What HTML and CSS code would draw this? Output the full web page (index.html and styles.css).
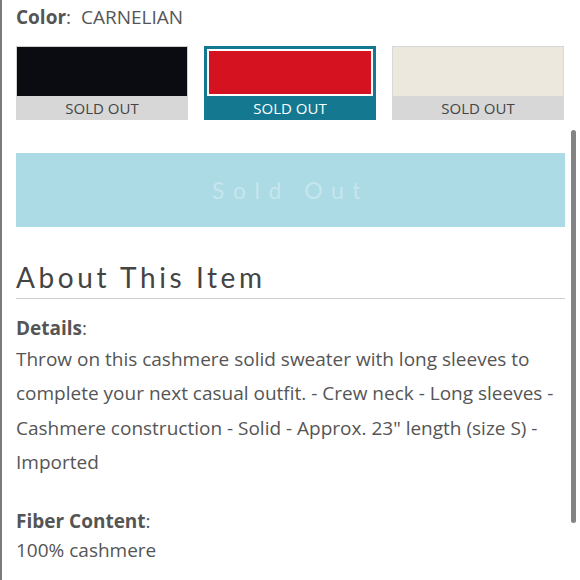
FILE: index.html
```html
<!DOCTYPE html>
<html>
<head>
<meta charset="utf-8">
<link rel="stylesheet" href="styles.css">
</head>
<body>
<div class="page">
  <div class="color-row"><span class="label">Color</span>:&nbsp; CARNELIAN</div>
  <div class="swatches">
    <div class="swatch">
      <div class="img black"></div>
      <div class="cap">SOLD OUT</div>
    </div>
    <div class="swatch selected">
      <div class="img red"></div>
      <div class="cap">SOLD OUT</div>
    </div>
    <div class="swatch">
      <div class="img cream"></div>
      <div class="cap">SOLD OUT</div>
    </div>
  </div>
  <div class="btn">Sold Out</div>
  <h2 class="about">About This Item</h2>
  <div class="section">
    <div class="label">Details<span class="colon">:</span></div>
    <p class="text">Throw on this cashmere solid sweater with long sleeves to complete your next casual outfit. - Crew neck - Long sleeves - Cashmere construction - Solid - Approx. 23" length (size S) - Imported</p>
  </div>
  <div class="section fiber">
    <div class="label">Fiber Content<span class="colon">:</span></div>
    <p class="text">100% cashmere</p>
  </div>
</div>
<div class="scrollbar"></div>
</body>
</html>
```
FILE: styles.css
```css
html, body {
  margin: 0;
  padding: 0;
  background: #fff;
}
body {
  height: 580px;
  overflow: hidden;
  border-left: 2px solid #7b7b7b;
  box-sizing: border-box;
  position: relative;
  font-family: "Open Sans", "Liberation Sans", sans-serif;
  color: #555;
}
.page {
  padding: 0 15px 0 14px;
}
.color-row {
  font-size: 19px;
  line-height: 24px;
  padding-top: 5px;
  color: #555;
}
.label {
  font-weight: 700;
  color: #555;
}
.colon { font-weight: 400; }
.swatches {
  display: flex;
  gap: 16px;
  margin-top: 17px;
}
.swatch {
  width: 172px;
  height: 74px;
  display: flex;
  flex-direction: column;
  box-sizing: border-box;
}
.swatch .img {
  height: 50px;
  box-sizing: border-box;
}
.img.black { background: #0b0b12; border: 1px solid #cfcfcf; border-bottom: none; }
.img.cream { background: #ece8de; border: 1px solid #d8d8d8; border-bottom: none; }
.swatch.selected {
  background: #147891;
  padding: 3px 3px 0;
}
.swatch.selected .img {
  height: 48px;
  background: #d5121f;
  border: 2px solid #fff;
}
.cap {
  flex: 1;
  background: #d7d7d7;
  color: #444;
  font-size: 15px;
  text-align: center;
  line-height: 24px;
}
.swatch.selected .cap {
  background: #147891;
  color: #fff;
}
.btn {
  margin-top: 33px;
  height: 74px;
  background: #acdae5;
  color: #c6e6ee;
  font-family: "Lato", "Liberation Sans", sans-serif;
  font-size: 23px;
  letter-spacing: 8.5px;
  display: flex;
  align-items: center;
  justify-content: center;
}
.about {
  margin: 34px 0 0;
  font-family: "Lato", "Liberation Sans", sans-serif;
  font-weight: 400;
  font-size: 28px;
  letter-spacing: 3.6px;
  color: #444;
  line-height: 32px;
  padding-bottom: 5px;
  border-bottom: 1px solid #cfcfcf;
}
.section {
  margin-top: 15px;
  font-size: 19px;
}
.section .label {
  line-height: 28px;
}
.text {
  margin: 0;
  line-height: 34.4px;
}
.fiber {
  margin-top: 27px;
}
.fiber .text { line-height: 30px; }
.scrollbar {
  position: absolute;
  left: 569px;
  top: 130px;
  width: 5px;
  height: 393px;
  border-radius: 3px;
  background: #848484;
}
```
